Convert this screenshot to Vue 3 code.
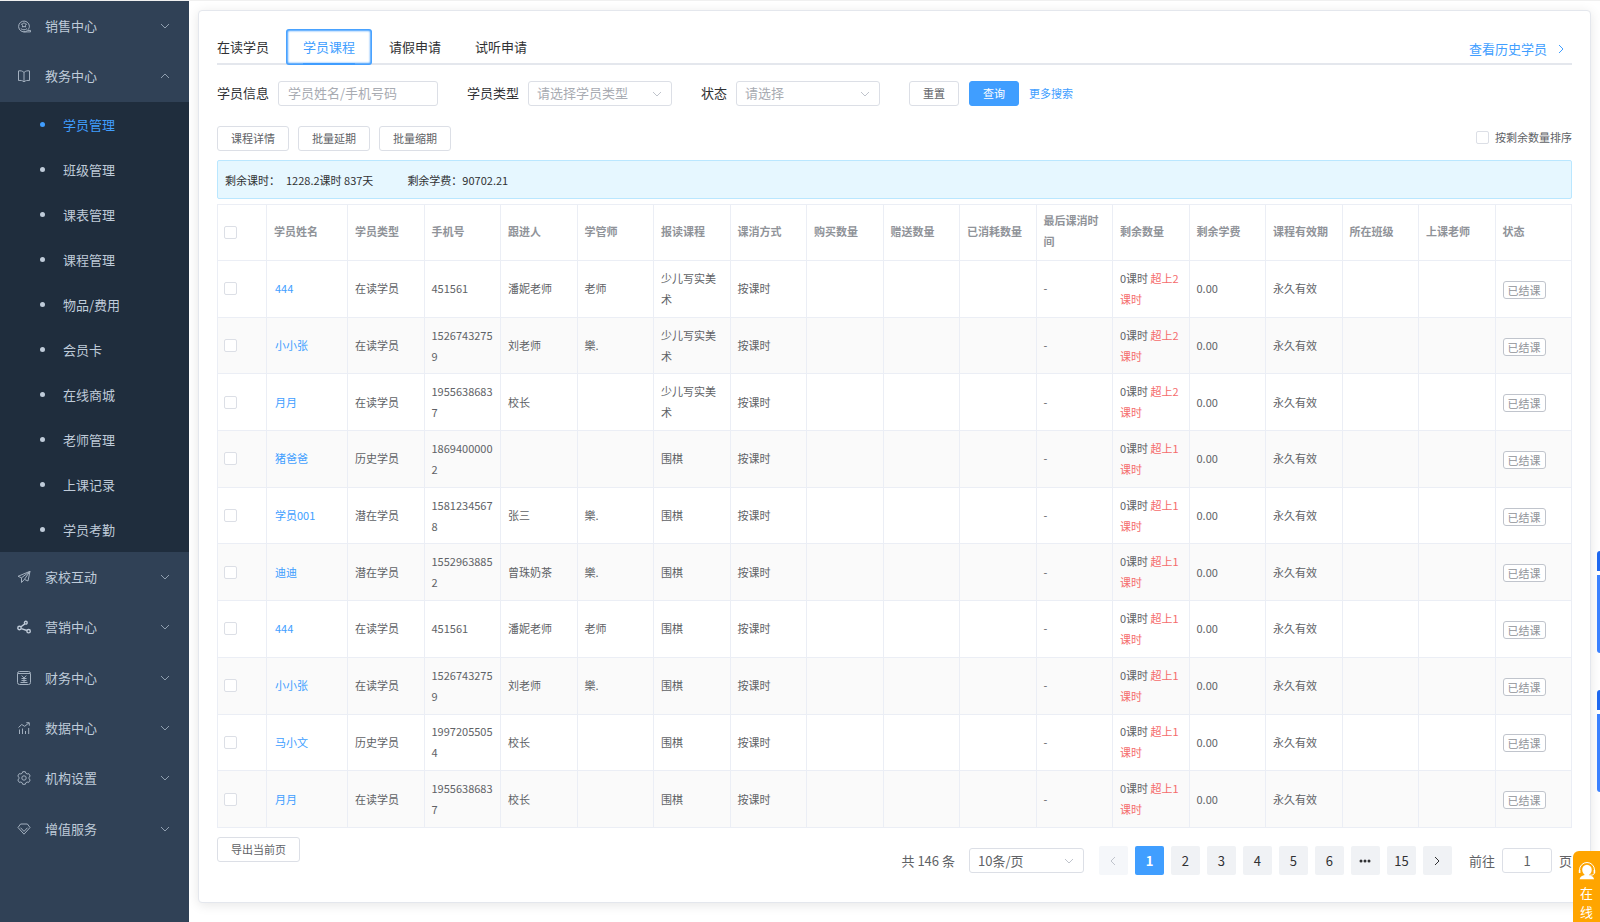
<script setup>
import { ref } from 'vue'

const topMenu = [
  { label: '销售中心', icon: 'sales', open: false },
  { label: '教务中心', icon: 'book', open: true },
]
const subMenu = ['学员管理', '班级管理', '课表管理', '课程管理', '物品/费用', '会员卡', '在线商城', '老师管理', '上课记录', '学员考勤']
const bottomMenu = [
  { label: '家校互动', icon: 'plane' },
  { label: '营销中心', icon: 'share' },
  { label: '财务中心', icon: 'money' },
  { label: '数据中心', icon: 'chart' },
  { label: '机构设置', icon: 'gear' },
  { label: '增值服务', icon: 'gem' },
]
const tabs = ['在读学员', '学员课程', '请假申请', '试听申请']
const activeTab = ref('学员课程')
const keyword = ref('')
const page = ref(1)
const goTo = ref('1')

const columns = ['学员姓名', '学员类型', '手机号', '跟进人', '学管师', '报读课程', '课消方式', '购买数量', '赠送数量', '已消耗数量', '最后课消时间', '剩余数量', '剩余学费', '课程有效期', '所在班级', '上课老师', '状态']
const rows = [
  ['444', '在读学员', '451561', '潘妮老师', '老师', '少儿写实美术', 2],
  ['小小张', '在读学员', '15267432759', '刘老师', '樂.', '少儿写实美术', 2],
  ['月月', '在读学员', '19556386837', '校长', '', '少儿写实美术', 2],
  ['猪爸爸', '历史学员', '18694000002', '', '', '围棋', 1],
  ['学员001', '潜在学员', '15812345678', '张三', '樂.', '围棋', 1],
  ['迪迪', '潜在学员', '15529638852', '曾珠奶茶', '樂.', '围棋', 1],
  ['444', '在读学员', '451561', '潘妮老师', '老师', '围棋', 1],
  ['小小张', '在读学员', '15267432759', '刘老师', '樂.', '围棋', 1],
  ['马小文', '历史学员', '19972055054', '校长', '', '围棋', 1],
  ['月月', '在读学员', '19556386837', '校长', '', '围棋', 1],
].map(([name, type, phone, follower, manager, course, over]) => ({ name, type, phone, follower, manager, course, over }))
</script>

<template>
  <div class="layout">
    <nav class="sidebar" aria-label="主菜单">
      <button v-for="m in topMenu" :key="m.label" class="menu-item" type="button" :aria-expanded="m.open">
        <svg v-if="m.icon === 'sales'" class="icon" viewBox="0 0 14 14" aria-hidden="true">
          <path d="M10.500 11.600A5.400 5.400 0 1 1 12.400 7.200c0 1.600-.8 2.800-1.600 3.600M6.500 12.900h7v-1.500h-3" />
          <path d="M7 3.600l1 1.200 1.500.3-1 1.300.1 1.600L7 7.500l-1.600.5.1-1.600-1-1.300L6 4.800zM3.800 9.600c2 1.600 4.400 1.600 6.200 0" />
        </svg>
        <svg v-else class="icon" viewBox="0 0 14 14" aria-hidden="true">
          <path d="M7 3.500C5.500 1.800 3.500 1.600 1.500 1.900v9.600c2-.3 4 0 5.500 1.300 1.500-1.300 3.500-1.600 5.500-1.300V1.900C10.500 1.600 8.500 1.800 7 3.500zM7 3.500v9.300" />
        </svg>
        <span class="menu-label">{{ m.label }}</span>
        <svg class="chevron" viewBox="0 0 10 6" aria-hidden="true"><path :d="m.open ? 'M1 5l4-4 4 4' : 'M1 1l4 4 4-4'" /></svg>
      </button>
      <ul class="submenu">
        <li v-for="(s, i) in subMenu" :key="s">
          <a href="#" class="sub-item" :class="{ active: i === 0 }"><i class="dot"></i>{{ s }}</a>
        </li>
      </ul>
      <div class="menu-rest">
        <button v-for="m in bottomMenu" :key="m.label" class="menu-item" type="button" aria-expanded="false">
          <svg class="icon" viewBox="0 0 14 14" aria-hidden="true">
            <template v-if="m.icon === 'plane'">
              <path d="M1 6.300L13 1.300l-2 9.700-3.600-1.600L13 1.300 4.500 7.800zM4.500 7.800v4.700l2.900-3.100" />
            </template>
            <template v-else-if="m.icon === 'share'">
              <g class="bold"><circle cx="8.800" cy="2.700" r="1.400" /><circle cx="2.500" cy="8" r="1.700" /><circle cx="11.600" cy="11.200" r="1.700" /><path d="M7.800 3.900L4 6.800M4.300 8.700l5.600 1.800" /></g>
            </template>
            <template v-else-if="m.icon === 'money'">
              <rect x=".5" y=".5" width="13" height="13" rx="2" />
              <path d="M1 2.500h12M4.700 4.500L7 7l2.300-2.500M7 7v4.500M4.500 7.500h5M4.500 9.500h5M3.500 11.500h7" />
            </template>
            <template v-else-if="m.icon === 'chart'">
              <path d="M1.500 6.500l3.200-3 3 1.800 4.300-3.500M9.300 1.700h3v3M2.500 8.500v4.500M5.500 7.500v5.500M8.500 10v3M11.700 7v6" />
            </template>
            <template v-else-if="m.icon === 'gear'">
              <path d="M5.200 2.200L5.700.7h2.600l.5 1.500 1.300.8 1.600-.4L13.200 5l-1.100 1.200v1.600L13.200 9l-1.500 2.400-1.600-.4-1.300.8-.5 1.500H5.700l-.5-1.500-1.300-.8-1.600.4L.8 9l1.100-1.200V6.200L.8 5l1.500-2.400 1.600.4z" />
              <circle cx="7" cy="7" r="2.200" />
            </template>
            <template v-else>
              <path d="M3.600 2h6.800l2.600 3.500L7 12.200 1 5.500zM3.500 5.700L7 9.400l3.500-3.700" />
            </template>
          </svg>
          <span class="menu-label">{{ m.label }}</span>
          <svg class="chevron" viewBox="0 0 10 6" aria-hidden="true"><path d="M1 1l4 4 4-4" /></svg>
        </button>
      </div>
    </nav>

    <main class="main">
      <section class="card">
        <div class="tabs">
          <div class="tab-list" role="tablist">
            <button v-for="t in tabs" :key="t" type="button" role="tab" class="tab" :class="{ active: t === activeTab }" :aria-selected="t === activeTab" @click="activeTab = t">{{ t }}</button>
          </div>
          <a href="#" class="history">查看历史学员<svg viewBox="0 0 6 10" aria-hidden="true"><path d="M1 1l4 4-4 4" /></svg></a>
        </div>

        <form class="search" @submit.prevent>
          <div class="field">
            <label for="info">学员信息</label>
            <input id="info" v-model="keyword" class="control text" type="text" placeholder="学员姓名/手机号码" />
          </div>
          <div class="field">
            <label for="type">学员类型</label>
            <span class="select"><select id="type" class="control"><option>请选择学员类型</option></select>
              <svg class="chevron" viewBox="0 0 10 6" aria-hidden="true"><path d="M1 1l4 4 4-4" /></svg></span>
          </div>
          <div class="field">
            <label for="state">状态</label>
            <span class="select"><select id="state" class="control"><option>请选择</option></select>
              <svg class="chevron" viewBox="0 0 10 6" aria-hidden="true"><path d="M1 1l4 4 4-4" /></svg></span>
          </div>
          <div class="actions">
            <button type="reset" class="btn">重置</button>
            <button type="submit" class="btn primary">查询</button>
            <a href="#" class="more">更多搜索</a>
          </div>
        </form>

        <div class="toolbar">
          <button type="button" class="btn">课程详情</button>
          <button type="button" class="btn">批量延期</button>
          <button type="button" class="btn">批量缩期</button>
          <label class="sort"><input type="checkbox" class="check" />按剩余数量排序</label>
        </div>

        <div class="summary">
          <span>剩余课时：</span><span class="hours">1228.2课时 837天</span><span>剩余学费：90702.21</span>
        </div>

        <table class="grid">
          <colgroup><col class="col-check" /><col class="col-name" /><col v-for="c in columns.length - 1" :key="c" /></colgroup>
          <thead>
            <tr>
              <th class="pick"><input type="checkbox" class="check" aria-label="全选" /></th>
              <th v-for="c in columns" :key="c" scope="col">{{ c }}</th>
            </tr>
          </thead>
          <tbody>
            <tr v-for="(r, i) in rows" :key="i">
              <td class="pick"><input type="checkbox" class="check" :aria-label="'选择' + r.name" /></td>
              <td class="name"><a href="#">{{ r.name }}</a></td>
              <td>{{ r.type }}</td>
              <td>{{ r.phone }}</td>
              <td>{{ r.follower }}</td>
              <td>{{ r.manager }}</td>
              <td>{{ r.course }}</td>
              <td>按课时</td>
              <td></td>
              <td></td>
              <td></td>
              <td>-</td>
              <td>0课时 <span class="over">超上{{ r.over }}</span><wbr /><span class="over">课时</span></td>
              <td>0.00</td>
              <td>永久有效</td>
              <td></td>
              <td></td>
              <td><span class="tag">已结课</span></td>
            </tr>
          </tbody>
        </table>

        <div class="footer">
          <button type="button" class="btn">导出当前页</button>
          <div class="pagination">
            <span class="total">共 146 条</span>
            <span class="select size"><select class="control" aria-label="每页条数"><option>10条/页</option></select>
              <svg class="chevron" viewBox="0 0 10 6" aria-hidden="true"><path d="M1 1l4 4 4-4" /></svg></span>
            <div class="pages">
              <button type="button" class="page" disabled aria-label="上一页"><svg viewBox="0 0 6 10"><path d="M5 1L1 5l4 4" /></svg></button>
              <button v-for="n in 6" :key="n" type="button" class="page" :class="{ current: n === page }" @click="page = n">{{ n }}</button>
              <button type="button" class="page" aria-label="向后 5 页"><svg class="dots" viewBox="0 0 12 4"><circle cx="2" cy="2" r="1.500" /><circle cx="6" cy="2" r="1.500" /><circle cx="10" cy="2" r="1.500" /></svg></button>
              <button type="button" class="page">15</button>
              <button type="button" class="page" aria-label="下一页"><svg viewBox="0 0 6 10"><path d="M1 1l4 4-4 4" /></svg></button>
            </div>
            <label class="jump">前往<input v-model="goTo" class="control" type="text" />页</label>
          </div>
        </div>
      </section>
    </main>

    <div class="float-card upper" aria-hidden="true"></div>
    <div class="float-card lower" aria-hidden="true"></div>
    <button type="button" class="service">
      <svg viewBox="0 0 18 18" aria-hidden="true">
        <path class="arc" d="M1.500 10V8a7.500 7.500 0 0 1 15 0v2" />
        <path class="fill" d="M9 2.800a4.800 4.800 0 0 0-4.800 5.200c.2 2.400 1.400 4 2.600 4.900-2.400.5-4.600 1.700-5.300 4.300h14.600c-.7-2.600-2.200-3.200-4.400-3.700l-.4-.9c1.600-1 2.400-2.600 2.400-4.800A4.800 4.800 0 0 0 9 2.800zM.8 8h1.600v3H.8zM15.600 8h1.600v3h-1.600z" />
        <path class="arc" d="M16.500 11c-.5 1.800-2.500 2.300-4.500 2.200" />
      </svg>
      <span>在</span><span>线</span>
    </button>
  </div>
</template>

<style>
body {
  margin: 0;
  background: #fff;
}
</style>

<style scoped>
* {
  box-sizing: border-box;
}
.layout {
  position: relative;
  display: flex;
  min-height: 100vh;
  overflow: hidden;
  border-top: 1px solid #f0f0f0;
  color: #303133;
  font-family: "Noto Sans CJK SC", "Noto Sans", sans-serif;
  font-size: 13px;
  line-height: 20px;
}
button,
input,
select {
  margin: 0;
  font: inherit;
}
button {
  cursor: pointer;
}
a {
  color: #409eff;
  text-decoration: none;
}
svg {
  fill: none;
  stroke: currentColor;
}

.sidebar {
  flex: 0 0 189px;
  margin-top: -1px;
  border-top: 1px solid #2b2f3a;
  background: #304156;
}
.menu-item {
  display: flex;
  align-items: center;
  width: 100%;
  min-height: 50px;
  padding: 0 19px 0 17px;
  border: 0;
  background: none;
  color: #bfcbd9;
  text-align: left;
}
.icon {
  width: 14px;
  height: 14px;
  margin-right: 14px;
  color: #a3b0bf;
}
.icon .bold {
  color: #bfcbd9;
  stroke-width: 1.4;
}
.menu-label {
  flex: 1;
}
.chevron {
  width: 10px;
  height: 6px;
  color: #909fb0;
}
.submenu {
  margin: 1px 0 0;
  padding: 0;
  background: #1f2d3d;
  list-style: none;
}
.sub-item {
  display: flex;
  align-items: center;
  height: 45px;
  padding-left: 40px;
  color: #bfcbd9;
}
.sub-item.active {
  color: #409eff;
}
.dot {
  width: 5px;
  height: 5px;
  margin-right: 18px;
  border-radius: 50%;
  background: currentColor;
}
.menu-rest {
  display: grid;
  grid-auto-rows: 1fr;
  min-height: 302px;
}

.main {
  flex: 1;
  min-width: 0;
  padding: 9px;
}
.card {
  padding: 18px 18px 27px;
  border: 1px solid #e4e7ed;
  border-radius: 4px;
  background: #fff;
  box-shadow: 0 2px 12px rgba(0, 0, 0, 0.1);
}
.tabs {
  display: flex;
  justify-content: space-between;
  height: 36px;
  background: linear-gradient(#e4e7ed, #e4e7ed) bottom / 100% 2px no-repeat;
}
.tab-list {
  display: flex;
}
.tab {
  padding: 0 17px;
  border: 0;
  background: none;
  color: #303133;
}
.tab:first-child {
  padding-left: 0;
}
.tab.active {
  border-radius: 3px;
  background: linear-gradient(#409eff, #409eff) bottom / 52px 2px no-repeat;
  box-shadow: inset 0 0 2px 2px #409eff;
  color: #409eff;
}
.history {
  display: flex;
  align-items: center;
  gap: 11px;
  padding: 4px 8px 0 0;
}
.history svg {
  width: 6px;
  height: 10px;
}

.search {
  display: flex;
  align-items: center;
  gap: 29px;
  margin-top: 16px;
}
.field {
  display: flex;
  align-items: center;
  gap: 9px;
}
.field label {
  padding-bottom: 2px;
}
.control {
  width: 100%;
  height: 25px;
  padding: 0 8px 2px;
  border: 1px solid #dcdfe6;
  border-radius: 3px;
  outline: 0;
  appearance: none;
  background: #fff;
  color: #a8abb2;
}
.control::placeholder {
  color: #a8abb2;
  opacity: 1;
}
.text {
  width: 160px;
  padding-left: 9px;
  color: #606266;
}
.select {
  position: relative;
  display: block;
  width: 144px;
  height: 25px;
}
.select .chevron {
  position: absolute;
  top: 10px;
  right: 10px;
  color: #c0c4cc;
  pointer-events: none;
}
.actions {
  display: flex;
  align-items: center;
  gap: 10px;
  font-size: 11px;
}
.more {
  padding-bottom: 2px;
}
.btn {
  height: 25px;
  padding: 0 13px 2px;
  border: 1px solid #dcdfe6;
  border-radius: 3px;
  background: #fff;
  color: #606266;
  font-size: 11px;
  line-height: 20px;
}
.btn.primary {
  border-color: #409eff;
  background: #409eff;
  color: #fff;
}
.toolbar {
  display: flex;
  align-items: center;
  gap: 9px;
  margin-top: 20px;
}
.sort {
  display: flex;
  align-items: center;
  gap: 6px;
  margin-left: auto;
  padding-bottom: 3px;
  color: #606266;
  font-size: 11px;
}
.check {
  display: block;
  width: 13px;
  height: 13px;
  border: 1px solid #dcdfe6;
  border-radius: 2px;
  appearance: none;
  background: #fff;
}
.summary {
  display: flex;
  align-items: center;
  height: 39px;
  margin: 9px 0 5px;
  padding: 0 7px;
  border: 1px solid #bae7ff;
  border-radius: 2px;
  background: #e6f7ff;
  font-size: 11px;
}
.hours {
  margin: 0 34px 0 6px;
}

.grid {
  width: 100%;
  height: 624px;
  table-layout: fixed;
  border: solid #ebeef5;
  border-width: 1px 0 0 1px;
  border-spacing: 0;
  color: #606266;
  font-size: 11px;
  line-height: 21px;
}
.col-check {
  width: 49px;
}
.col-name {
  width: 81px;
}
.grid th,
.grid td {
  padding: 6px 7px;
  border: solid #ebeef5;
  border-width: 0 1px 1px 0;
  text-align: left;
  vertical-align: middle;
  word-break: break-all;
}
.grid th {
  padding: 5px 7px 8px;
  color: #909399;
  font-weight: 700;
}
.grid .pick {
  padding: 0 6px;
}
.grid .name {
  padding-left: 8px;
}
.grid tbody tr:nth-child(even) {
  background: #fafafa;
}
.over {
  color: #f56c6c;
}
.tag {
  display: block;
  width: max-content;
  margin-top: 2px;
  padding: 0 4px;
  border: 1px solid #c0c4cc;
  border-radius: 3px;
  background: #fff;
  color: #909399;
  line-height: 16px;
}

.footer {
  display: flex;
  align-items: flex-start;
  justify-content: space-between;
  margin-top: 9px;
}
.pagination {
  display: flex;
  align-items: center;
  gap: 14px;
  margin-top: 9px;
  color: #606266;
}
.pagination .control {
  padding-bottom: 0;
  color: #606266;
}
.size {
  width: 115px;
}
.pages {
  display: flex;
  gap: 7px;
  margin-left: 1px;
}
.page {
  display: flex;
  align-items: center;
  justify-content: center;
  width: 29px;
  height: 29px;
  padding: 0;
  border: 0;
  border-radius: 2px;
  background: #f0f2f5;
  color: #303133;
}
.page:disabled {
  background: #f5f7fa;
  color: #c0c4cc;
}
.page.current {
  background: #409eff;
  color: #fff;
  font-weight: 700;
}
.page svg {
  width: 6px;
  height: 10px;
}
.page .dots {
  width: 12px;
  height: 4px;
  fill: currentColor;
  stroke: none;
}
.jump {
  display: flex;
  align-items: center;
  gap: 7px;
  margin-left: 3px;
}
.jump .control {
  width: 50px;
  text-align: center;
}

.float-card {
  position: absolute;
  right: 0;
  width: 3px;
  height: 102px;
  border-radius: 6px 0 0 6px;
  background: linear-gradient(#1e68f0 0 20px, #fff 20px 24px, #3b82ff 24px);
}
.upper {
  top: 550px;
}
.lower {
  top: 689px;
}
.service {
  position: absolute;
  right: 0;
  bottom: 0;
  display: flex;
  flex-direction: column;
  align-items: center;
  width: 27px;
  height: 71px;
  padding: 11px 0 0;
  border: 0;
  border-radius: 6px 0 0 0;
  background: #ffa500;
  color: #fff;
  line-height: 19px;
}
.service svg {
  flex: none;
  width: 18px;
  height: 18px;
  margin-bottom: 3px;
}
.service .arc {
  stroke-width: 1;
}
.service .fill {
  fill: currentColor;
  stroke: none;
}
</style>
